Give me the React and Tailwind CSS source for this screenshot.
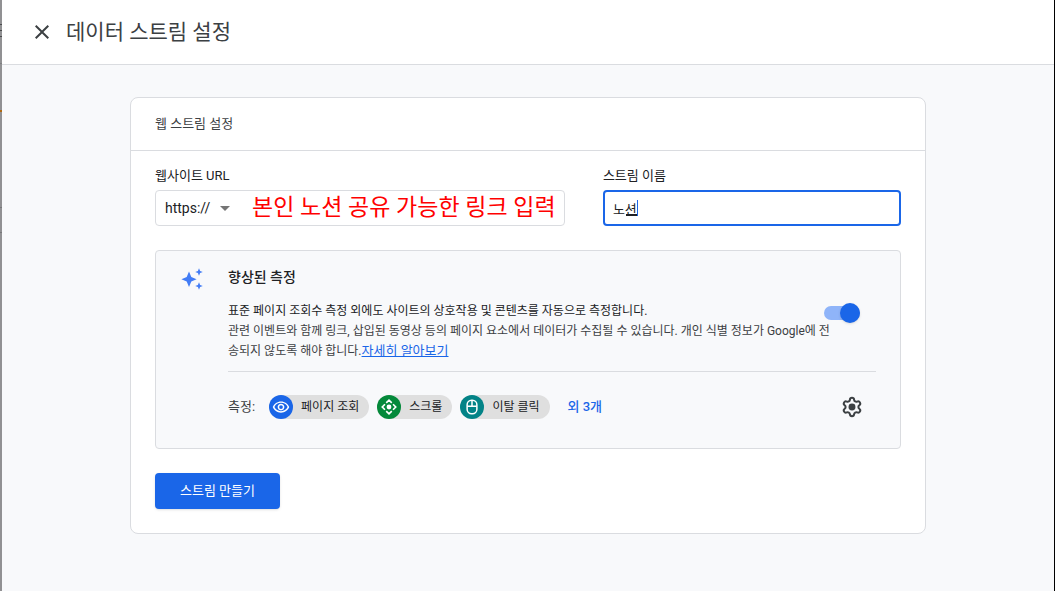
import React, { useState } from 'react';
import { MdClose, MdArrowDropDown, MdOutlineRemoveRedEye } from 'react-icons/md';

function SparkleIcon() {
    return (
        <svg viewBox="0 0 24 24" className="w-6 h-6 shrink-0 text-[#427cf5]" fill="currentColor" aria-hidden="true">
            <path d="M9 4.5 11.3 9.9 16.6 12.2 11.3 14.5 9 19.9 6.7 14.5 1.4 12.2 6.7 9.9Z" />
            <path d="M19 1.2 20.1 3.9 22.8 5 20.1 6.1 19 8.8 17.9 6.1 15.2 5 17.9 3.9Z" />
            <path d="M19 15.2 20.1 17.9 22.8 19 20.1 20.1 19 22.8 17.9 20.1 15.2 19 17.9 17.9Z" />
        </svg>
    );
}

function ScrollIcon({ className }) {
    return (
        <svg viewBox="0 0 24 24" className={className} fill="none" stroke="currentColor" strokeWidth="2.2" aria-hidden="true">
            <circle cx="12" cy="12" r="3.2" fill="currentColor" stroke="none" />
            <path d="M8.3 6.6 12 3 15.7 6.6M8.3 17.4 12 21 15.7 17.4M6.6 8.3 3 12 6.6 15.7M17.4 8.3 21 12 17.4 15.7" />
        </svg>
    );
}

function MouseIcon({ className }) {
    return (
        <svg viewBox="0 0 24 24" className={className} fill="none" stroke="currentColor" strokeWidth="2" aria-hidden="true">
            <rect x="5.5" y="3" width="13" height="18" rx="6" />
            <path d="M5.5 11H18.5M12 3V11" />
        </svg>
    );
}

function GearIcon() {
    return (
        <svg viewBox="0 0 24 24" className="w-[22px] h-[22px]" fill="none" stroke="currentColor" strokeWidth="2.2" strokeLinejoin="round" aria-hidden="true">
            <path d="M9.671 4.136a2.34 2.34 0 0 1 4.659 0 2.34 2.34 0 0 0 3.319 1.915 2.34 2.34 0 0 1 2.33 4.033 2.34 2.34 0 0 0 0 3.831 2.34 2.34 0 0 1-2.33 4.033 2.34 2.34 0 0 0-3.319 1.915 2.34 2.34 0 0 1-4.659 0 2.34 2.34 0 0 0-3.32-1.915 2.34 2.34 0 0 1-2.33-4.033 2.34 2.34 0 0 0 0-3.831A2.34 2.34 0 0 1 6.35 6.051a2.34 2.34 0 0 0 3.319-1.915" />
            <circle cx="12" cy="12" r="3.8" fill="currentColor" stroke="none" />
        </svg>
    );
}

const chips = [
    { label: '페이지 조회', icon: MdOutlineRemoveRedEye, bg: 'bg-[#1a66e8]' },
    { label: '스크롤', icon: ScrollIcon, bg: 'bg-[#04893a]' },
    { label: '이탈 클릭', icon: MouseIcon, bg: 'bg-[#038387]' },
];

export default function App() {
    const [url, setUrl] = useState('본인 노션 공유 가능한 링크 입력');
    const [name, setName] = useState('노션');
    const [enhanced, setEnhanced] = useState(true);

    return (
        <div className="flex min-h-screen bg-[#f8f9fb] font-[Roboto,'Noto_Sans_CJK_KR',sans-serif] text-[#3c4043]">
            {/* Dimmed page behind the sheet */}
            <div className="w-[2px] shrink-0 bg-[#919193]">
                <div className="h-[25px] border-b border-[#4a4b4d]" />
                <div className="h-[5px]" />
                <div className="h-[7px] border-y border-[#4a4b4d]" />
                <div className="h-[27px] border-b border-[#7d7e80]" />
                <div className="h-12 border-b-2 border-[#b06a12]" />
                <div className="h-24 border-b border-[#77787a]" />
                <div className="h-[25px] border-b border-[#77787a]" />
            </div>

            <div className="flex-1 min-w-0 border-r border-black">
                <header className="flex items-center gap-3 h-[65px] pl-7 bg-white border-b border-[#dadce0]">
                    <button type="button" aria-label="닫기">
                        <MdClose className="w-6 h-6" />
                    </button>
                    <h1 className="text-[21px] leading-7">데이터 스트림 설정</h1>
                </header>

                <main className="px-32 py-8">
                    <section className="bg-white border border-[#dadce0] rounded-lg">
                        <h2 className="px-6 py-4 text-[13px] leading-5 border-b border-[#dadce0]">웹 스트림 설정</h2>

                        <form className="p-6 pt-[15px]" onSubmit={(e) => e.preventDefault()}>
                            <div className="grid grid-cols-[11fr_8fr] gap-[38px]">
                                <div>
                                    <label htmlFor="url" className="block h-6 text-[13px] leading-5 text-[#202124]">웹사이트 URL</label>
                                    <div className="flex items-center h-9 border border-[#dadce0] rounded">
                                        <div className="relative flex items-center">
                                            <select aria-label="프로토콜" className="appearance-none w-[81px] h-8 pl-[9px] text-sm text-[#202124] bg-transparent outline-none">
                                                <option>https://</option>
                                                <option>http://</option>
                                            </select>
                                            <MdArrowDropDown className="absolute right-0 w-6 h-6 text-[#757575] pointer-events-none" />
                                        </div>
                                        <input
                                            id="url"
                                            value={url}
                                            onChange={(e) => setUrl(e.target.value)}
                                            className="flex-1 min-w-0 h-8 pl-[15px] text-[23px] text-[#ff0000] bg-transparent outline-none"
                                        />
                                    </div>
                                </div>
                                <div>
                                    <label htmlFor="name" className="block h-6 text-[13px] leading-5 text-[#202124]">스트림 이름</label>
                                    <div className="relative">
                                        <input
                                            id="name"
                                            value={name}
                                            onChange={(e) => setName(e.target.value)}
                                            className="w-full h-9 px-2 text-[13px] text-[#202124] bg-white border-2 border-[#1a66e8] rounded outline-none"
                                        />
                                        {/* IME composition mark and caret */}
                                        <span className="absolute left-[23px] bottom-[10px] w-[11px] h-[2px] bg-[#202124]" />
                                        <span className="absolute left-[34px] top-[10px] w-px h-4 bg-[#1a66e8]" />
                                    </div>
                                </div>
                            </div>

                            <div className="flex gap-6 mt-6 p-6 pt-4 bg-[#f8f9fb] border border-[#dadce0] rounded">
                                <SparkleIcon />
                                <div className="flex-1 min-w-0">
                                    <h3 className="text-sm leading-5 font-medium text-[#202124]">향상된 측정</h3>
                                    <div className="flex items-center mt-[14px] pb-[10px] border-b border-[#dadce0]">
                                        {/* The long line may run a little below the switch */}
                                        <div className="flex-1 min-w-0 text-xs leading-5 whitespace-nowrap">
                                            <p className="text-[#202124]">표준 페이지 조회수 측정 외에도 사이트의 상호작용 및 콘텐츠를 자동으로 측정합니다.</p>
                                            <p>
                                                관련 이벤트와 함께 링크, 삽입된 동영상 등의 페이지 요소에서 데이터가 수집될 수 있습니다. 개인 식별 정보가 Google에 전<br />
                                                송되지 않도록 해야 합니다.
                                                <a href="#learn" className="text-[13px] text-[#1a66e8] underline">자세히 알아보기</a>
                                            </p>
                                        </div>
                                        <label className="relative flex items-center w-9 h-5 mr-4 mb-9 shrink-0">
                                            <input
                                                type="checkbox"
                                                role="switch"
                                                aria-label="향상된 측정"
                                                checked={enhanced}
                                                onChange={() => setEnhanced(!enhanced)}
                                                className="peer appearance-none w-9 h-[14px] rounded-full bg-gray-300 checked:bg-[#8fb4f9]"
                                            />
                                            <span className="absolute left-0 w-5 h-5 rounded-full bg-white shadow peer-checked:left-4 peer-checked:bg-[#1a66e8]" />
                                        </label>
                                    </div>

                                    <div className="flex items-center gap-2 pt-[23px] pb-[5px]">
                                        <span className="mr-[6px] text-[13px] leading-5">측정:</span>
                                        {chips.map(({ label, icon: Icon, bg }) => (
                                            <span key={label} className="flex items-center gap-2 h-6 pr-[10px] rounded-full bg-[#dfdfdf] text-xs text-[#202124]">
                                                <span className={`flex items-center justify-center w-6 h-6 rounded-full text-white ${bg}`}>
                                                    <Icon className="w-[18px] h-[18px]" />
                                                </span>
                                                {label}
                                            </span>
                                        ))}
                                        <a href="#more" className="ml-[10px] text-[13px] font-medium text-[#1a66e8]">외 3개</a>
                                        <button type="button" aria-label="측정 설정" className="ml-auto mr-[13px]">
                                            <GearIcon />
                                        </button>
                                    </div>
                                </div>
                            </div>

                            <button type="submit" className="h-9 mt-6 px-[25px] text-[13px] text-white bg-[#1a66e8] rounded-sm shadow">
                                스트림 만들기
                            </button>
                        </form>
                    </section>
                </main>
            </div>
        </div>
    );
}
